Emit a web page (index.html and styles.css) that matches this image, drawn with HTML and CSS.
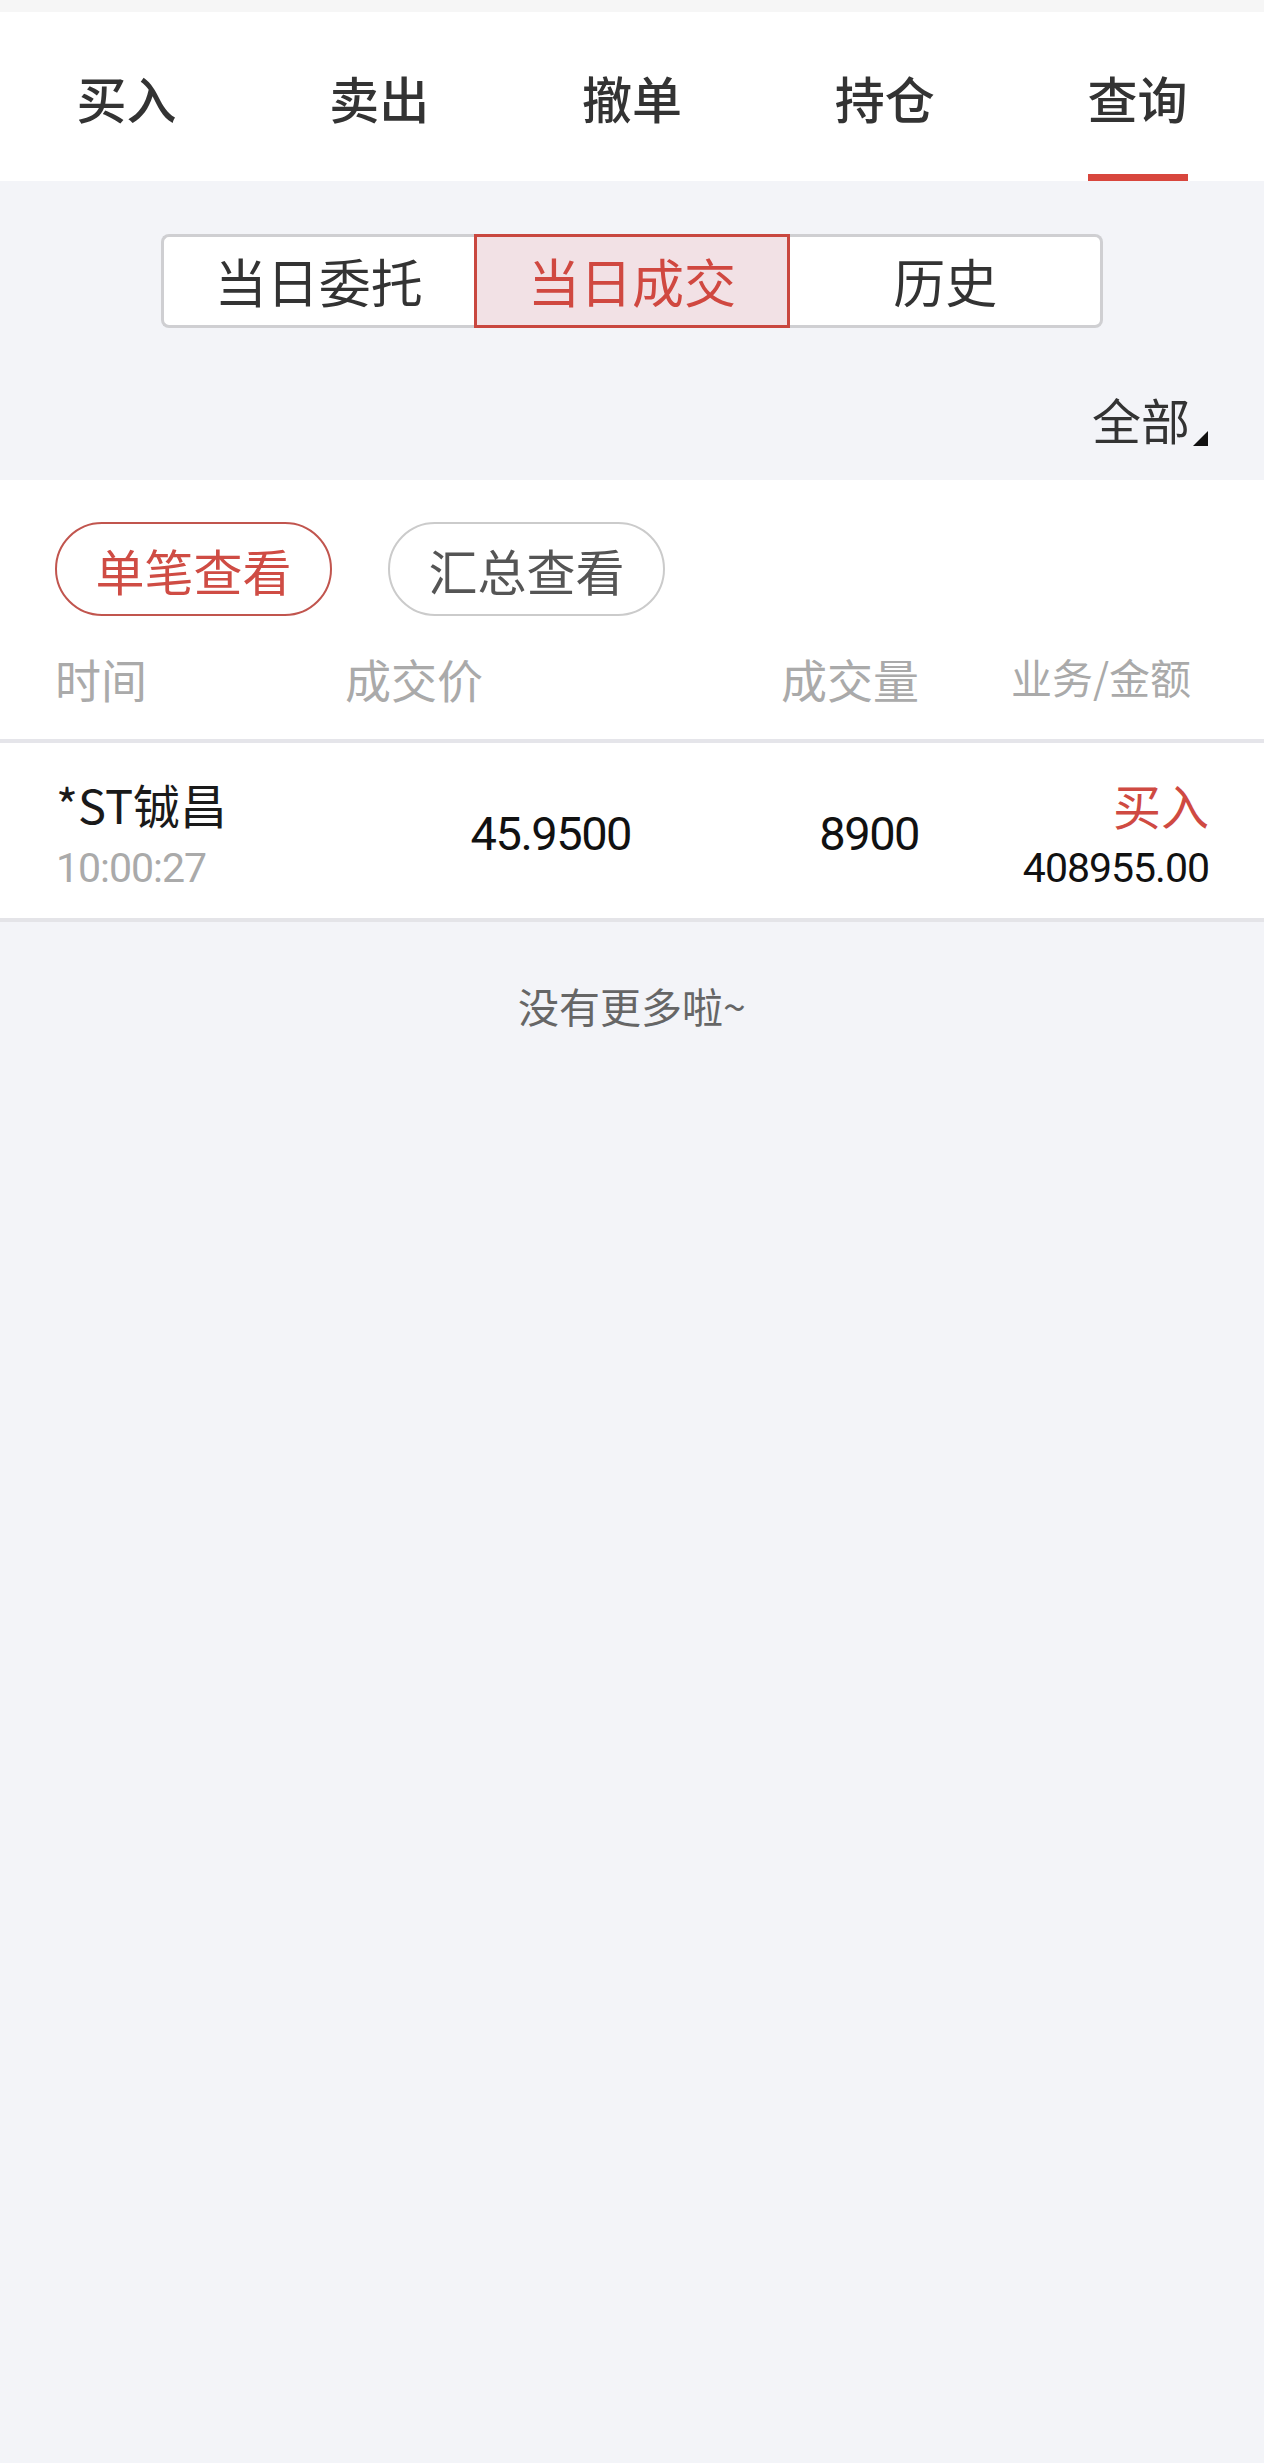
FILE: index.html
```html
<!DOCTYPE html>
<html lang="zh-CN">
<head>
    <meta charset="UTF-8">
    <meta name="viewport" content="width=device-width, initial-scale=1.0">
    <title>查询</title>
    <link rel="stylesheet" href="styles.css">
</head>
<body>

    <div class="status-strip"></div>

    <!-- Top trade tabs -->
    <nav class="tabs">
        <a class="tab"><span>买入</span></a>
        <a class="tab"><span>卖出</span></a>
        <a class="tab"><span>撤单</span></a>
        <a class="tab"><span>持仓</span></a>
        <a class="tab active"><span>查询</span></a>
    </nav>

    <section class="panel">
        <div class="segments">
            <div class="seg">当日委托</div>
            <div class="seg active">当日成交</div>
            <div class="seg">历史</div>
        </div>
        <div class="filter">
            <span>全部</span><i class="corner"></i>
        </div>
    </section>

    <section class="list">
        <div class="views">
            <span class="pill active">单笔查看</span>
            <span class="pill">汇总查看</span>
        </div>
        <div class="thead">
            <span>时间</span>
            <span>成交价</span>
            <span class="right">成交量</span>
            <span class="right small">业务/金额</span>
        </div>
    </section>

    <div class="row">
        <div class="cell-name">
            <div class="name">*ST铖昌</div>
            <div class="time num">10:00:27</div>
        </div>
        <div class="price num">45.9500</div>
        <div class="volume num">8900</div>
        <div class="cell-deal">
            <div class="side buy">买入</div>
            <div class="amount num">408955.00</div>
        </div>
    </div>

    <p class="no-more">没有更多啦~</p>

</body>
</html>
```

FILE: styles.css
```css
/* Basic Reset */
* {
    margin: 0;
    padding: 0;
    box-sizing: border-box;
}

body {
    font-family: "Noto Sans CJK SC", "Noto Sans", sans-serif;
    background: #f3f4f8;
    color: #333;
    min-height: 2463px;
}

.num {
    font-family: Roboto, "Noto Sans CJK SC", sans-serif;
}

.status-strip {
    height: 12px;
    background: #f6f6f6;
}

/* Tabs */
.tabs {
    display: flex;
    height: 169px;
    background: #fff;
}

.tab {
    flex: 1;
    display: flex;
    flex-direction: column;
    align-items: center;
    justify-content: flex-end;
    font-size: 50px;
    font-weight: 500;
    color: #333;
}

    .tab span {
        line-height: 50px;
        padding-bottom: 52px;
        border-bottom: 7px solid transparent;
        min-width: 98px;
        text-align: center;
    }

    .tab.active span {
        border-bottom-color: #d8463d;
    }

/* Grey panel with segmented control */
.panel {
    height: 299px;
    padding-top: 53px;
}

.segments {
    display: flex;
    width: 943px;
    height: 94px;
    margin: 0 auto;
}

.seg {
    flex: 1;
    display: flex;
    align-items: center;
    justify-content: center;
    background: #fff;
    border-top: 3px solid #cfcfd2;
    border-bottom: 3px solid #cfcfd2;
    font-size: 52px;
    line-height: 52px;
    color: #333;
}

    .seg:first-child {
        border-left: 3px solid #cfcfd2;
        border-radius: 8px 0 0 8px;
    }

    .seg:last-child {
        border-right: 3px solid #cfcfd2;
        border-radius: 0 8px 8px 0;
    }

    .seg.active {
        border: 3px solid #c9473f;
        background: #f2e1e5;
        color: #d04840;
    }

.filter {
    display: flex;
    justify-content: flex-end;
    align-items: flex-end;
    padding: 66px 56px 0 0;
    font-size: 49px;
    line-height: 49px;
    color: #333;
}

.corner {
    width: 0;
    height: 0;
    border-left: 15px solid transparent;
    border-bottom: 15px solid #111;
    margin: 0 0 -3px 3px;
}

/* White list header */
.list {
    background: #fff;
    padding: 42px 73px 38px 55px;
    border-bottom: 4px solid #e5e5ea;
}

.views {
    display: flex;
    gap: 56px;
}

.pill {
    width: 277px;
    height: 94px;
    display: flex;
    align-items: center;
    justify-content: center;
    border: 2px solid #cbcbcb;
    border-radius: 47px;
    font-size: 49px;
    line-height: 49px;
    color: #555;
}

    .pill.active {
        border-color: #c1554e;
        color: #cf4c44;
    }

.thead {
    display: grid;
    grid-template-columns: 290px 290px 284px 1fr;
    align-items: center;
    margin-top: 39px;
    font-size: 46px;
    line-height: 46px;
    color: #aaa;
}

    .thead .right {
        text-align: right;
    }

    .thead .small {
        font-size: 41px;
        margin-top: -4px;
    }

/* Deal row */
.row {
    display: grid;
    grid-template-columns: 290px 285px 288px 1fr;
    height: 179px;
    padding: 37px 55px 0 56px;
    background: #fff;
    border-bottom: 4px solid #e4e4e8;
}

.name {
    font-size: 47px;
    line-height: 47px;
    color: #1a1a1a;
}

.time {
    margin-top: 21px;
    font-size: 41px;
    line-height: 41px;
    letter-spacing: -1px;
    color: #aaa;
}

.price,
.volume {
    text-align: right;
    padding-top: 30px;
    font-size: 47px;
    line-height: 47px;
    letter-spacing: -1.5px;
    color: #111;
}

.cell-deal {
    text-align: right;
}

.side {
    font-size: 48px;
    line-height: 48px;
}

    .side.buy {
        color: #cf4a42;
    }

.amount {
    margin-top: 20px;
    font-size: 41px;
    line-height: 41px;
    letter-spacing: -1px;
    color: #111;
}

.no-more {
    margin-top: 63px;
    text-align: center;
    font-size: 41px;
    line-height: 41px;
    color: #666;
}
```
